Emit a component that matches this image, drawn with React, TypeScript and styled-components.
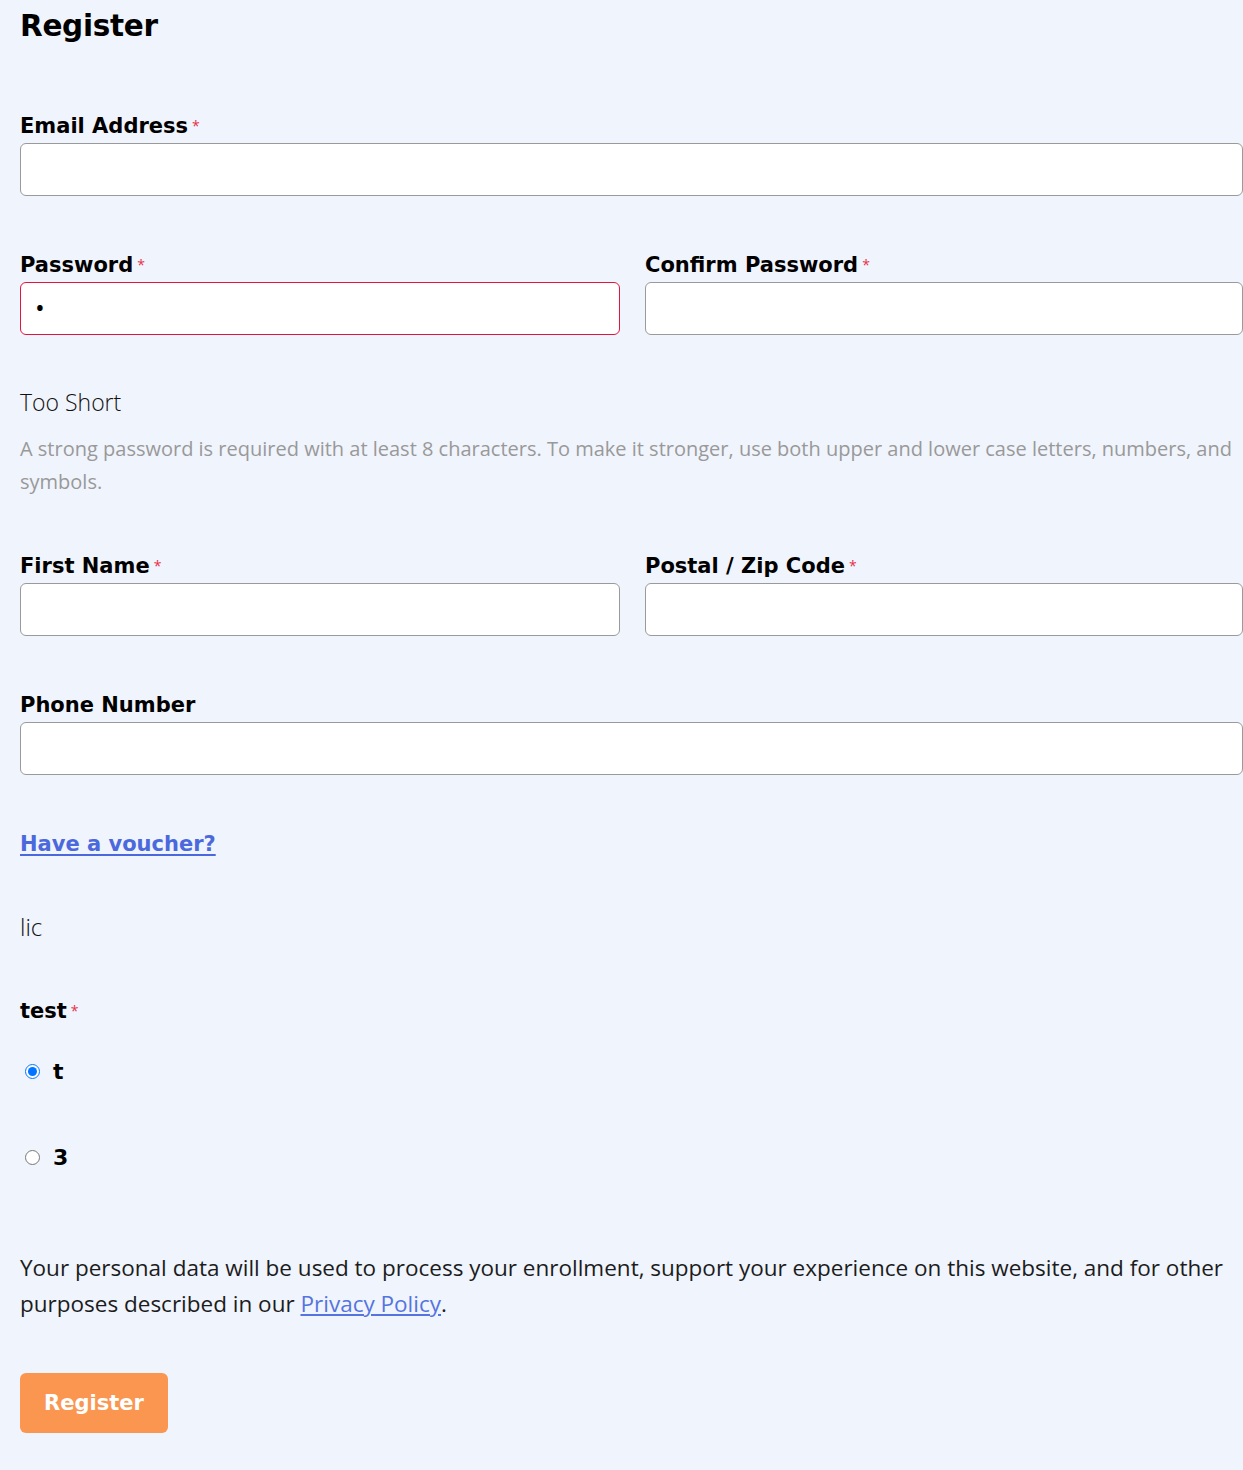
import React from "react";
import styled, { createGlobalStyle } from "styled-components";

const GlobalStyle = createGlobalStyle`
  html, body {
    margin: 0;
    padding: 0;
    background: #f0f4fc;
  }
  body {
    font-family: "Open Sans", "Noto Sans", sans-serif;
    color: #1c1c1c;
  }
  * { box-sizing: border-box; }
`;

const heading = `"DejaVu Sans", "Liberation Sans", sans-serif`;

const Page = styled.div`
  padding: 7px 0 40px 20px;
  width: 1243px;
`;

const Title = styled.h1`
  font-family: ${heading};
  font-weight: 700;
  font-size: 29.5px;
  line-height: 38px;
  letter-spacing: -0.3px;
  color: #000;
  margin: 0 0 66px;
`;

const Form = styled.form`
  display: flex;
  flex-direction: column;
`;

const Row = styled.div<{ $mb?: number }>`
  display: grid;
  grid-template-columns: 600px 1fr;
  column-gap: 25px;
  width: 100%;
  margin-bottom: ${(p) => p.$mb ?? 54}px;
`;

const Field = styled.div<{ $mb?: number }>`
  display: flex;
  flex-direction: column;
  margin-bottom: ${(p) => p.$mb ?? 0}px;
`;

const Label = styled.label`
  font-family: ${heading};
  font-weight: 700;
  font-size: 21px;
  line-height: 26px;
  color: #000;
  padding-top: 2px;
  margin-bottom: 4px;
  display: flex;
  align-items: flex-start;
`;

const Req = styled.span`
  color: #e8304a;
  font-family: "Open Sans", sans-serif;
  font-weight: 400;
  font-size: 14px;
  line-height: 18px;
  margin: 4px 0 0 4px;
`;

const Input = styled.input<{ $error?: boolean }>`
  width: 100%;
  height: 53px;
  border: 1px solid ${(p) => (p.$error ? "#e0143c" : "#9a9a9a")};
  border-radius: 6px;
  background: #fff;
  padding: 0 14px 4px;
  font-family: "Open Sans", sans-serif;
  font-size: 26px;
  color: #000;
  outline: none;
`;

const Strength = styled.div`
  font-family: "Open Sans", sans-serif;
  font-weight: 300;
  font-size: 23px;
  line-height: 32px;
  color: #111;
  margin: 51px 0 14px;
`;

const Hint = styled.p`
  font-family: "Open Sans", sans-serif;
  font-size: 20px;
  line-height: 33px;
  color: #999;
  margin: 0 0 53px;
  width: 1223px;
`;

const Voucher = styled.a`
  font-family: ${heading};
  font-weight: 700;
  font-size: 21px;
  line-height: 28px;
  color: #4b69dc;
  text-decoration: underline;
  text-underline-offset: 3px;
  align-self: flex-start;
  margin: 0 0 53px;
`;

const Plain = styled.div`
  font-family: "Open Sans", sans-serif;
  font-weight: 300;
  font-size: 24px;
  line-height: 32px;
  color: #111;
  margin-bottom: 53px;
`;

const GroupLabel = styled(Label)`
  margin-bottom: 34px;
`;

const Options = styled.div`
  display: flex;
  flex-direction: column;
  gap: 60px;
  margin-bottom: 80px;
`;

const Option = styled.label`
  display: flex;
  align-items: center;
  height: 26px;
  font-family: ${heading};
  font-weight: 700;
  font-size: 22px;
  color: #000;
`;

const Radio = styled.input`
  margin: 0 13px 0 5px;
  width: 15px;
  height: 15px;
`;

const Privacy = styled.p`
  font-family: "Open Sans", sans-serif;
  font-size: 22.5px;
  line-height: 36px;
  color: #1c1c1c;
  margin: 0 0 51px;
  width: 1223px;
`;

const PrivacyLink = styled.a`
  color: #5574e0;
  text-decoration: underline;
`;

const Button = styled.button`
  align-self: flex-start;
  width: 148px;
  height: 60px;
  border: none;
  border-radius: 6px;
  background: #fb9650;
  color: #fff;
  font-family: ${heading};
  font-weight: 700;
  font-size: 21px;
  cursor: pointer;
`;

const RequiredLabel: React.FC<{ children: React.ReactNode }> = ({ children }) => (
  <Label>
    {children}
    <Req>*</Req>
  </Label>
);

export default function App() {
  return (
    <Page>
      <GlobalStyle />
      <Title>Register</Title>
      <Form onSubmit={(e) => e.preventDefault()}>
        <Field $mb={54}>
          <RequiredLabel>Email Address</RequiredLabel>
          <Input type="email" />
        </Field>
        <Row $mb={0}>
          <Field>
            <RequiredLabel>Password</RequiredLabel>
            <Input type="password" defaultValue="a" $error />
          </Field>
          <Field>
            <RequiredLabel>Confirm Password</RequiredLabel>
            <Input type="password" />
          </Field>
        </Row>
        <Strength>Too Short</Strength>
        <Hint>
          A strong password is required with at least 8 characters. To make it stronger, use both upper and lower case
          letters, numbers, and symbols.
        </Hint>
        <Row>
          <Field>
            <RequiredLabel>First Name</RequiredLabel>
            <Input type="text" />
          </Field>
          <Field>
            <RequiredLabel>Postal / Zip Code</RequiredLabel>
            <Input type="text" />
          </Field>
        </Row>
        <Field $mb={55}>
          <Label>Phone Number</Label>
          <Input type="tel" />
        </Field>
        <Voucher href="#">Have a voucher?</Voucher>
        <Plain>lic</Plain>
        <GroupLabel>
          test<Req>*</Req>
        </GroupLabel>
        <Options>
          <Option>
            <Radio type="radio" name="test" defaultChecked />t
          </Option>
          <Option>
            <Radio type="radio" name="test" />3
          </Option>
        </Options>
        <Privacy>
          Your personal data will be used to process your enrollment, support your experience on this website, and for
          other purposes described in our <PrivacyLink href="#">Privacy Policy</PrivacyLink>.
        </Privacy>
        <Button type="submit">Register</Button>
      </Form>
    </Page>
  );
}
